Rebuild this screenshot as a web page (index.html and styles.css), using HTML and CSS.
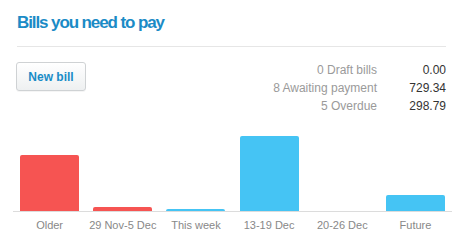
FILE: index.html
```html
<!DOCTYPE html>
<html lang="en">
<head>
<meta charset="utf-8">
<title>Bills you need to pay</title>
<link rel="stylesheet" href="styles.css">
</head>
<body>
<section class="widget">
  <h2 class="title">Bills you need to pay</h2>
  <div class="toolbar">
    <button class="btn" type="button">New bill</button>
    <div class="summary">
      <span class="s-label">0 Draft bills</span><span class="s-value">0.00</span>
      <span class="s-label">8 Awaiting payment</span><span class="s-value">729.34</span>
      <span class="s-label">5 Overdue</span><span class="s-value">298.79</span>
    </div>
  </div>
  <div class="chart">
    <div class="plot">
      <div class="col"><div class="bar bar-over" style="height:56px"></div></div>
      <div class="col"><div class="bar bar-over" style="height:4px"></div></div>
      <div class="col"><div class="bar bar-due" style="height:2px"></div></div>
      <div class="col"><div class="bar bar-due" style="height:75px"></div></div>
      <div class="col"><div class="bar bar-due" style="height:0px"></div></div>
      <div class="col"><div class="bar bar-due" style="height:16px"></div></div>
    </div>
    <div class="labels">
      <span>Older</span>
      <span>29 Nov-5 Dec</span>
      <span>This week</span>
      <span>13-19 Dec</span>
      <span>20-26 Dec</span>
      <span>Future</span>
    </div>
  </div>
</section>
</body>
</html>
```

FILE: styles.css
```css
html, body {
  margin: 0;
  padding: 0;
  background: #ffffff;
}

body {
  font-family: "Liberation Sans", Arial, sans-serif;
  width: 469px;
  height: 241px;
  overflow: hidden;
}

.widget {
  padding: 13px 23px 0 17px;
}

.title {
  margin: 0;
  font-size: 17px;
  line-height: 20px;
  font-weight: bold;
  letter-spacing: -1.1px;
  color: #1b8bc6;
  padding-bottom: 13px;
  border-bottom: 1px solid #e6e6e6;
}

.toolbar {
  display: flex;
  justify-content: space-between;
  align-items: flex-start;
  margin-top: 14px;
}

.btn {
  margin: 1px 0 0 -1px;
  width: 70px;
  height: 29px;
  padding: 0;
  border: 1px solid #cfd2d4;
  border-radius: 3px;
  background: linear-gradient(#ffffff, #eef0f1);
  font-family: "Liberation Sans", Arial, sans-serif;
  font-size: 12px;
  font-weight: bold;
  color: #1a8cc7;
  box-shadow: 0 1px 0 rgba(0, 0, 0, 0.04);
}

.summary {
  display: grid;
  grid-template-columns: auto 69px;
  font-size: 12px;
  line-height: 18px;
  text-align: right;
}

.s-label {
  color: #9a9a9a;
}

.s-value {
  color: #333333;
}

.chart {
  margin: 6px -6px 0 -4px;
}

.plot {
  display: flex;
  height: 90px;
  border-bottom: 1px solid #dcdcdc;
}

.col {
  flex: 1;
  display: flex;
  align-items: flex-end;
  justify-content: center;
}

.bar {
  width: 59px;
  border-radius: 2px 2px 0 0;
}

.bar-over {
  background: #f65452;
}

.bar-due {
  background: #45c4f4;
}

.labels {
  display: flex;
  margin-top: 5px;
  font-size: 11px;
  line-height: 16px;
  color: #888888;
}

.labels span {
  flex: 1;
  text-align: center;
}
```
